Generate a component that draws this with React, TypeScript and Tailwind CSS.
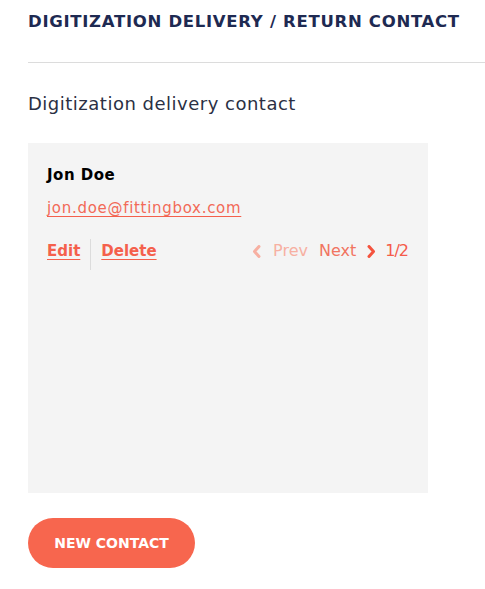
function Chevron({ dir, className }: { dir: "left" | "right"; className?: string }) {
    return (
        <svg width="9" height="13" viewBox="0 0 9 13" className={className}>
            <polyline
                points={dir === "left" ? "7,1.5 2.5,6.5 7,11.5" : "2,1.5 6.5,6.5 2,11.5"}
                fill="none"
                stroke="currentColor"
                strokeWidth="3"
                strokeLinecap="round"
                strokeLinejoin="round"
            />
        </svg>
    )
}

export default function App() {
    return (
        <div className="min-h-[589px] w-[485px] bg-white pl-7" style={{ fontFamily: '"DejaVu Sans", sans-serif' }}>
            <h1 className="pt-[10px] text-[16.5px] font-bold leading-[24px] tracking-[0.7px] whitespace-nowrap text-[#1e2a52]">
                DIGITIZATION DELIVERY / RETURN CONTACT
            </h1>
            <div className="mt-[28px] h-px bg-[#dcdcdc]" />

            <h2 className="mt-[28px] text-[18px] leading-[26px] tracking-[0.5px] text-[#2b3044]">Digitization delivery contact</h2>

            <div className="mt-[26px] flex h-[350px] w-[400px] flex-col bg-[#f4f4f4] pl-[19px] pr-[20px] pt-[21px]">
                <p className="text-[15px] font-bold leading-[22px] tracking-[0.5px] text-black">Jon Doe</p>
                <div className="mt-[10px]">
                    <a href="#" className="text-[15px] leading-[22px] tracking-[0.7px] text-[#f26a58] underline decoration-[#f4604c] underline-offset-[3px]">
                        jon.doe@fittingbox.com
                    </a>
                </div>

                <div className="mt-[19px] flex h-[31px] items-center">
                    <a href="#" className="mb-[7px] pr-[10px] text-[15px] font-bold leading-[22px] text-[#f4604c] underline underline-offset-[3px]">
                        Edit
                    </a>
                    <div className="h-full w-px bg-[#dcdcdc]" />
                    <a href="#" className="mb-[7px] pl-[10px] text-[15px] font-bold leading-[22px] text-[#f4604c] underline underline-offset-[3px]">
                        Delete
                    </a>

                    <div className="mb-[7px] ml-auto flex items-center text-[16px] leading-[22px]">
                        <Chevron dir="left" className="text-[#f7b0a2]" />
                        <span className="ml-[12px] text-[#f7b0a2]">Prev</span>
                        <span className="ml-[11px] text-[#f17461]">Next</span>
                        <Chevron dir="right" className="ml-[11px] text-[#f4533e]" />
                        <span className="ml-[9px] tracking-[-1px] text-[#f45b4b]">1/2</span>
                    </div>
                </div>
            </div>

            <button className="mt-[25px] h-[50px] w-[167px] rounded-full bg-[#f7664e] text-[14px] font-bold text-white">
                NEW CONTACT
            </button>
        </div>
    )
}
